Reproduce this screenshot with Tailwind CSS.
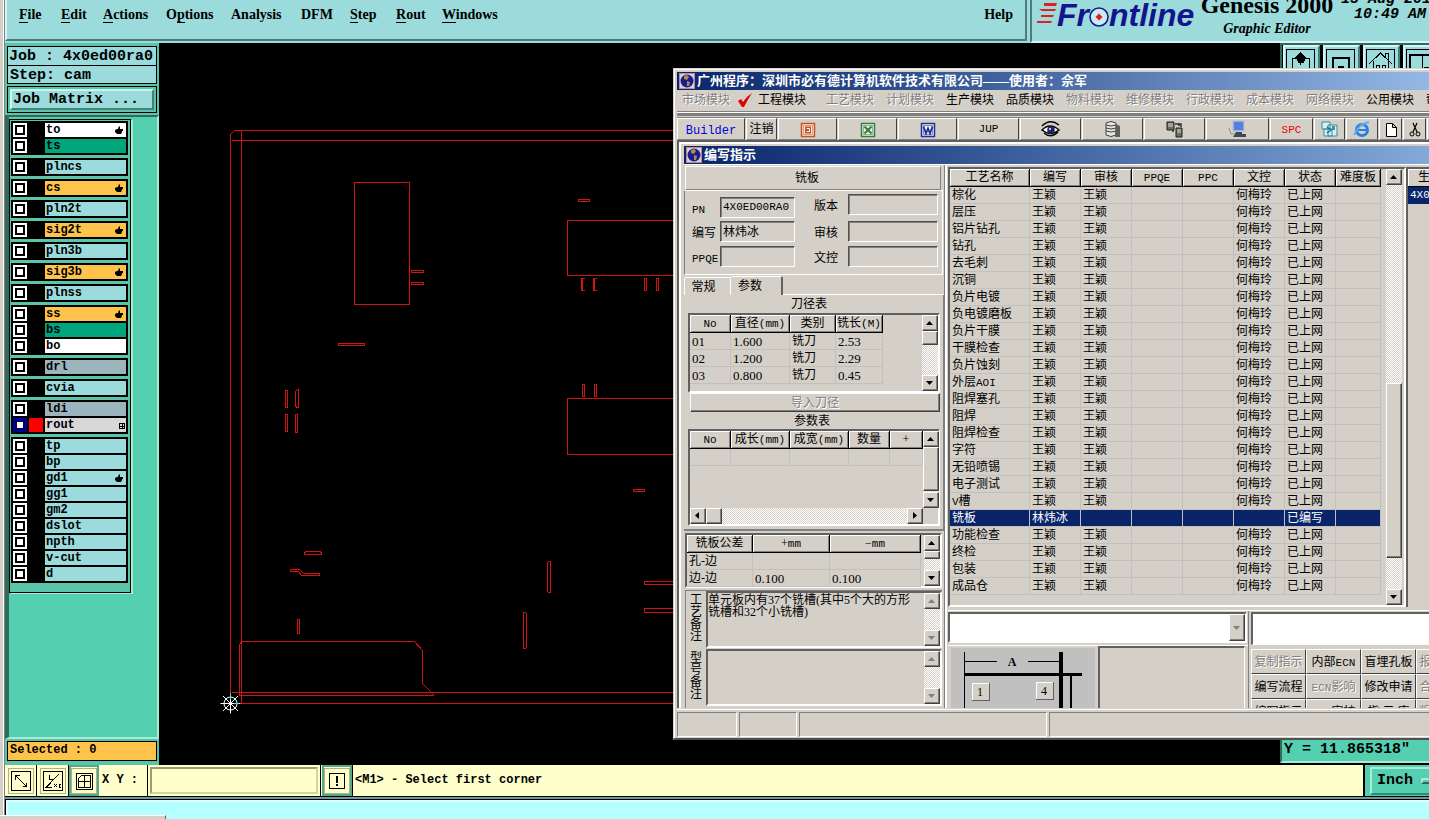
<!DOCTYPE html>
<html lang="zh">
<head>
<meta charset="utf-8">
<title>Genesis 2000 Graphic Editor</title>
<script src="https://cdn.jsdelivr.net/npm/@tailwindcss/browser@4"></script>
</head>
<body class="bg-black">
<div class="flex h-screen overflow-hidden bg-black text-black">
  <!-- desktop edge -->
  <div class="w-[5px] shrink-0 border-r border-[#808080] bg-[#d4d0c8] shadow-[inset_-1px_0_0_#fff]"></div>
  <div class="relative flex min-w-0 flex-1 flex-col">

    <!-- top bar -->
    <header class="flex h-[43px] shrink-0 overflow-hidden bg-[#9bdbdb]">
      <nav class="relative flex h-[41px] min-w-0 flex-1 border-r-2 border-b-2 border-l-2 border-r-[#4c7c7c] border-b-[#4c7c7c] border-l-[#d8f4f4] pt-[5px] pr-[12px] pl-[12px] font-['Liberation_Serif',serif] text-[14px] leading-5 font-bold" id="menu"></nav>
      <section class="relative ml-[3px] flex w-[399px] shrink-0 border-b-2 border-l-2 border-b-[#d8f4f4] border-l-[#4c7c7c]">
        <svg class="mt-[3px] ml-[5px] h-[22px] w-[20px] shrink-0" viewBox="0 0 20 22"><path d="M7 0H20L19 3H7zM2 6H19L18 8H5zM4 12H17L16 14H4zM0 18H15L14 20H0z" fill="#e02020"/></svg>
        <div class="-mt-[3px] flex h-9 w-[140px] shrink-0 items-center font-['Liberation_Sans',sans-serif] text-[32px] leading-9 font-bold text-[#14148c] italic">Fr<svg class="mt-[3px] h-[22px] w-[20px] shrink-0" viewBox="0 0 20 22"><circle cx="10" cy="11" r="9" fill="#c8ecf0" stroke="#14148c" stroke-width="1.500"/><path d="M10 7.500l3.500 3.500-3.500 3.500-3.500-3.500z" fill="#e02020"/></svg>ntline</div>
        <div class="-mt-[9px] flex w-[140px] shrink-0 flex-col items-center font-['Liberation_Serif',serif] font-bold whitespace-nowrap">
          <span class="text-[24px] leading-7">Genesis 2000</span>
          <span class="text-[14px] leading-5 italic">Graphic Editor</span>
        </div>
        <div class="-mt-[8px] ml-[4px] shrink-0 text-right font-['Liberation_Mono',monospace] text-[15px] leading-[15px] font-bold whitespace-nowrap italic"><div>15 Aug 2011</div><div class="pr-[14px]">10:49 AM</div></div>
      </section>
    </header>

    <!-- work area -->
    <main class="flex min-h-0 flex-1">
      <aside class="flex w-[154px] shrink-0 flex-col bg-[#5cc4a8] font-['Liberation_Mono',monospace] font-bold">
        <div class="mx-[2px] mt-[3px] border border-black bg-[#9bdbdb] text-[15px] leading-[19px] whitespace-nowrap">
          <div class="h-[19px] border-b border-black pl-[1px]">Job : 4x0ed00ra0</div>
          <div class="h-[17px] pl-[2px]">Step: cam</div>
        </div>
        <div class="mx-[2px] mt-[2px] border border-black p-[2px]">
          <button class="block h-[21px] w-full border-2 border-t-[#c8f8f0] border-r-[#4c7c7c] border-b-[#4c7c7c] border-l-[#c8f8f0] bg-[#9bdbdb] pl-[1px] text-left text-[15px] leading-[16px]">Job Matrix ...</button>
        </div>
        <div class="mt-[2px] flex min-h-0 flex-1 border-t-2 border-r-2 border-b-2 border-l-4 border-t-[#2f6b5b] border-r-[#a8ecd8] border-b-[#a8ecd8] border-l-[#2f6b5b] bg-[#54cfb0]">
          <div class="mt-[2px] flex w-[122px] flex-col self-start border border-black bg-[#5cc4a8] pt-[1px] pb-[6px] pl-[1px] shadow-[2px_1px_0_#a8ecd8]" id="layers"></div>
        </div>
        <div class="mx-[2px] mt-[2px] mb-[4px] h-[20px] border border-black bg-[#ffc34c] pl-[2px] text-[12px] leading-[17px]">Selected : 0</div>
      </aside>

      <section class="relative min-w-0 flex-1 overflow-hidden bg-black">
        <!-- board outline -->
        <svg class="absolute top-0 left-0 h-[722px] w-[1270px]" viewBox="159 43 1270 722" fill="none" stroke="#d01414" shape-rendering="crispEdges">
          <path d="M680 130.500H234.500L230.500 134.500V703.500M231.500 140.500H680M241.500 130.500V703.500H680M231.500 692.500H680"/>
          <path d="M239.500 695.500V644.500L241.500 641.500H414.500L422.500 650.500V683.500L433.500 694.500V695.500z"/>
          <path d="M354.500 182.500h55v122h-55zM567.500 220.500h120v55h-120zM567.500 398.500h120v56h-120z"/>
          <path d="M411.500 270.500h12v2h-12zM411.500 282.500h12v2h-12zM338.500 343.500h26v2h-26zM578.500 199.500h11v2h-11zM633.500 489.500h11v2h-11z"/>
          <path d="M285.500 390.500h2v17h-2zM295.500 391.500l2-2h1v18h-2l-1-2zM285.500 414.500h2v17h-2zM295.500 414.500h2v18h-2z"/>
          <path d="M584.500 278.500h-3v12h3M582.500 278.500v12M596.500 278.500h-3v12h3M594.500 278.500v12M644.500 278.500h2v12h-2zM656.500 278.500h2v12h-2zM582.500 384.500h2v12h-2zM594.500 384.500h2v12h-2z"/>
          <path d="M304.500 552.500l2-1h13l2 1v2h-17zM290.500 569.500h9l4 4h16v2h-18l-3-4h-8zM297.500 619.500h2v14h-2zM547.500 562.500l1-1h2v31h-2l-1-1zM523.500 612.500h2l1 1v34l-1 1h-2zM680 581.500h-35l-1 1v2h36M680 608.500h-35l-1 1v1l1 2h35"/>
          <g stroke="#fff" shape-rendering="auto"><circle cx="230.500" cy="703.500" r="6.500"/><path d="M220.500 703.500h20M230.500 693.500v20M223 696l15 15M238 696l-15 15"/><path stroke="#40e0e0" d="M230.500 693.500v6M234 703.500h5"/></g>
        </svg>

        <!-- view tools, partly covered by the window -->
        <div class="absolute top-0 right-0 flex w-[149px] gap-[3px] overflow-hidden border-t-2 border-l-2 border-[#2f6b5b] bg-black pl-[1px]" id="views"></div>
        <div class="absolute right-0 bottom-[2px] h-[30px] w-[149px] border-b-2 border-l-2 border-b-[#a8ecd8] border-l-[#2f6b5b] bg-[#54cfb0] pt-[8px] pl-[2px] font-['Liberation_Mono',monospace] text-[15px] leading-[18px] font-bold">Y = 11.865318"</div>

        <!-- application window -->
        <div class="absolute top-[25px] right-0 bottom-[25px] left-[514px] flex flex-col overflow-hidden border-t border-b-2 border-l border-t-[#d4d0c8] border-b-[#505050] border-l-[#d4d0c8] bg-[#d4d0c8] pt-[3px] pb-[1px] pl-[3px] font-['Liberation_Serif','Noto_Sans_CJK_SC',serif] text-[12px] leading-4 whitespace-nowrap shadow-[inset_1px_1px_0_#fff]">
          <div class="flex h-[18px] shrink-0 items-center gap-[2px] bg-linear-to-r from-[#0a246a] to-[#94b8e4] text-[13px] font-bold text-white"><span data-globe></span>广州程序：深圳市必有德计算机软件技术有限公司——使用者：佘军</div>
          <nav class="flex h-[20px] shrink-0 items-center pl-[5px]" id="modules"></nav>
          <div class="mt-[1px] h-[5px] shrink-0 border-t border-b-3 border-t-[#808080] border-b-[#808080] bg-white"></div>
          <div class="mt-[1px] flex h-[23px] shrink-0 gap-[1px] border-t border-[#808080]" id="toolbar"></div>

          <div class="flex min-h-0 flex-1 flex-col border-t-2 border-l-2 border-[#606060] pt-[4px] pl-[5px] shadow-[inset_2px_2px_0_#fff]">
            <div class="flex h-[18px] shrink-0 items-center gap-[2px] bg-linear-to-r from-[#0a246a] to-[#84a8d8] text-[13px] font-bold text-white"><span data-globe></span>编写指示</div>
            <div class="flex min-h-0 flex-1 overflow-hidden border-t border-white">

              <!-- left column -->
              <div class="flex w-[260px] shrink-0 flex-col">
                <div class="mt-[1px] mr-[3px] ml-[1px] h-[24px] shrink-0 border border-t-white border-r-[#808080] border-b-[#808080] border-l-white pr-[12px] text-center leading-[23px]">铣板</div>
                <div class="mr-[1px] flex h-[85px] shrink-0 border border-t-white border-r-white border-b-white border-l-[#808080] pl-[7px]" id="heads"></div>
                <div class="mt-[1px] flex h-[19px] shrink-0 items-end">
                  <button class="h-[18px] w-[47px] rounded-t-xs border-t border-r border-l border-white pr-[8px] leading-4">常规</button>
                  <button class="h-[19px] w-[52px] rounded-t-xs border-t border-r-2 border-t-white border-r-[#606060] pr-[12px] leading-4">参数</button>
                  <div class="h-px flex-1 bg-white"></div>
                </div>
                <div class="flex h-[236px] shrink-0 flex-col border-r border-b-2 border-[#808080] pr-[3px] pl-[4px]">
                  <div class="h-[18px] pr-[10px] text-center leading-[18px]">刀径表</div>
                  <div class="flex h-[80px] justify-between border-2 border-t-[#606060] border-r-white border-b-white border-l-[#606060]"><table id="tools" class="table-fixed border-separate border-spacing-0 self-start"></table><div data-bar="14"></div></div>
                  <button disabled class="ml-[2px] h-[19px] border border-t-white border-r-[#404040] border-b-[#404040] border-l-white text-center leading-4 text-[#808080] shadow-[inset_-1px_-1px_0_#808080] [text-shadow:1px_1px_0_#fff]">导入刀径</button>
                  <div class="h-[17px] pr-[4px] text-center leading-[18px]">参数表</div>
                  <div class="flex h-[97px] justify-between border-2 border-t-[#606060] border-r-white border-b-white border-l-[#606060]">
                    <div class="flex flex-1 flex-col justify-between"><table id="params" class="table-fixed border-separate border-spacing-0"></table>
                      <div class="flex h-4 bg-[repeating-conic-gradient(#fff_0_25%,#d4d0c8_0_50%)] bg-size-[2px_2px]"><button data-arrow="left"></button><div class="h-4 w-4 border border-t-white border-r-[#404040] border-b-[#404040] border-l-white bg-[#d4d0c8] shadow-[inset_-1px_-1px_0_#808080]"></div><button data-arrow="right" class="ml-auto"></button></div>
                    </div>
                    <div class="flex pb-[16px]"><div data-bar="44"></div></div>
                  </div>
                </div>
                <div class="mt-[2px] mr-[2px] ml-[1px] flex h-[55px] shrink-0 items-start justify-between border-2 border-t-[#606060] border-r-white border-b-white border-l-[#606060]"><table id="tolerance" class="table-fixed border-separate border-spacing-0"></table><div class="self-stretch" data-bar="8"></div></div>
                <div class="mt-[2px] mr-[2px] ml-[1px] flex min-h-0 flex-1 flex-col border-t border-l border-[#808080]" id="notes"></div>
              </div>

              <!-- right column -->
              <div class="flex min-w-0 flex-1 flex-col border-l border-[#808080] shadow-[inset_2px_0_0_#fff]">
                <div class="mt-[2px] ml-[3px] flex h-[440px] shrink-0">
                  <div class="flex w-[458px] shrink-0 border-2 border-t-[#606060] border-r-white border-b-white border-l-[#606060] pr-[2px]"><table id="process" class="table-fixed border-separate border-spacing-0 self-start"></table><div class="ml-auto flex" data-bar="175" data-top="198"></div></div>
                  <div class="min-w-0 flex-1 overflow-hidden border-t-2 border-l-2 border-[#606060]"><div class="h-[18px] border-b border-black pl-[10px] leading-[17px] shadow-[inset_1px_1px_0_#fff]">生产型号</div><div class="h-[17px] bg-[#0a246a] pl-[2px] font-['Liberation_Mono',monospace] text-[11px] leading-[17px] text-white">4X0ED00RA0</div></div>
                </div>
                <div class="mt-[3px] ml-[3px] flex min-h-0 flex-1 border-t border-white">
                  <div class="flex w-[301px] shrink-0 flex-col border-r border-[#808080]">
                    <div class="mt-[1px] flex h-[31px] w-[299px] shrink-0 border-2 border-t-[#606060] border-r-white border-b-white border-l-[#606060] bg-white">
                      <select aria-label="流程" class="min-w-0 flex-1 appearance-none bg-white"><option></option></select>
                      <button data-arrow="grey" data-tall></button>
                    </div>
                    <div class="mt-[2px] flex min-h-0 flex-1 overflow-hidden border-t border-white">
                      <svg class="mt-[2px] ml-[3px] h-[80px] w-[144px] shrink-0" viewBox="952 647 144 80" shape-rendering="crispEdges"><rect x="952" y="647" width="144" height="80" fill="#c0c0c0"/><path d="M965.500 651V727M965 660.500H998M1029 660.500H1062" stroke="#000"/><path d="M1072 674V727" stroke="#000" stroke-width="2"/><path d="M965 673.500H1083" stroke="#000" stroke-width="3"/><path d="M1062 651V727" stroke="#000" stroke-width="4"/><path d="M973 682h17v17h-17zM1037 681h17v17h-17z" fill="#d4d0c8" stroke="#606060"/><path d="M973 699v-17h17M1037 698v-17h17" stroke="#fff" fill="none"/><g font-family="Liberation Serif" font-size="12" text-anchor="middle"><text x="1013" y="665" font-weight="bold">A</text><text x="981" y="695">1</text><text x="1045" y="694">4</text></g></svg>
                      <div class="mr-[3px] ml-[3px] flex-1 border-t-2 border-r border-l-2 border-t-[#606060] border-r-white border-l-[#606060]"></div>
                    </div>
                  </div>
                  <div class="ml-[2px] flex min-w-0 flex-1 flex-col overflow-hidden">
                    <input aria-label="查询" class="mt-[1px] h-[33px] w-full shrink-0 border-t-2 border-b border-l-2 border-t-[#606060] border-b-white border-l-[#606060] bg-white">
                    <div class="mt-[4px] grid shrink-0 auto-rows-[25px] grid-cols-[repeat(4,55px)]" id="actions"></div>
                  </div>
                </div>
              </div>
            </div>
          </div>

          <footer class="mt-[1px] flex h-[28px] shrink-0 gap-[2px] border-t border-white pt-[2px]">
            <div class="w-[60px] border border-t-[#808080] border-r-white border-b-white border-l-[#808080]"></div>
            <div class="w-[58px] border border-t-[#808080] border-r-white border-b-white border-l-[#808080]"></div>
            <div class="w-[248px] border border-t-[#808080] border-r-white border-b-white border-l-[#808080]"></div>
            <div class="flex-1 border-t border-b border-l border-t-[#808080] border-b-white border-l-[#808080]"></div>
          </footer>
        </div>
      </section>
    </main>

    <!-- command line -->
    <div class="flex h-[32px] shrink-0 border-b border-black bg-[#ffffcc] font-['Liberation_Mono',monospace] text-[12px] font-bold">
      <button aria-label="Zoom" class="flex w-[32px] items-center justify-center border-r border-black"><svg class="size-[26px]" viewBox="0 0 26 26" fill="none" stroke="#000" shape-rendering="crispEdges"><path stroke="#b0b080" d="M.5 .5h25v25h-25z"/><path d="M3.500 3.500h19v19h-19zM7 7l12 12M7.500 11.500v-4h4M14.500 18.500h4v-4"/></svg></button>
      <button aria-label="Angle" class="flex w-[32px] items-center justify-center border-r border-black"><svg class="size-[26px]" viewBox="0 0 26 26" fill="none" stroke="#000" shape-rendering="crispEdges"><path stroke="#b0b080" d="M.5 .5h25v25h-25z"/><path d="M3.500 3.500h19v19h-19zM19 6L6 19.500h6M9.500 7v4h3M14 16l3 3M14 19l3-3M21 16h-2v3h2"/></svg></button>
      <button aria-label="Grid" class="flex w-[30px] items-center justify-center border-2 border-[#54a890] bg-[#ffffcc]"><svg class="size-[26px]" viewBox="0 0 26 26" fill="none" stroke="#000" shape-rendering="crispEdges"><path stroke="#b0b080" d="M.5 .5h25v25h-25z"/><path d="M5.500 5.500h16v16h-16zM13.500 7v13M7 13.500h13M7.500 19.500v-9l3-3h9v12z"/></svg></button>
      <label for="xy" class="w-[48px] pl-[3px] leading-[30px]">X Y :</label>
      <div class="w-[174px] border-x border-black p-[2px]"><input id="xy" class="h-full w-full border-2 border-t-[#9c9c70] border-r-[#d4d4a0] border-b-[#d4d4a0] border-l-[#9c9c70] bg-[#ffffcc] px-1"></div>
      <button aria-label="Alert" class="ml-[1px] flex w-[30px] items-center justify-center border-2 border-[#54a890] bg-[#ffffcc]"><svg class="size-[26px] shrink-0" viewBox="0 0 26 26" fill="none" stroke="#000" shape-rendering="crispEdges"><path stroke="#b0b080" d="M.5 .5h25v25h-25z"/><path d="M5.500 5.500h15v15h-15z"/><path fill="#000" stroke="none" d="M12 8h2v7h-2zM12 16h2v2h-2z"/></svg></button>
      <div class="min-w-0 flex-1 border-r-2 border-l border-black pl-[2px] leading-[30px]">&lt;M1&gt; - Select first corner</div>
      <div class="flex w-[64px] bg-[#54cfb0] pt-[2px] pl-[5px]"><button class="flex h-[28px] flex-1 items-center gap-2 border-2 border-r-0 border-t-[#a8ecd8] border-b-[#2f8b73] border-l-[#a8ecd8] pl-[5px] text-[15px] leading-5">Inch<span class="h-[6px] w-[14px] shrink-0 border-2 border-t-[#a8ecd8] border-r-[#2f6b5b] border-b-[#2f6b5b] border-l-[#a8ecd8]"></span></button></div>
    </div>
    <div class="h-[22px] shrink-0 border-t-2 border-[#6c9c98] bg-[#b4ffff]"><div class="h-full border-t border-l border-black shadow-[inset_2px_2px_0_#dcffff]"></div></div>
  </div>
  <div class="absolute bottom-0 left-0 h-[4px] w-[166px] border-t border-r border-t-white border-r-[#606060] bg-[#d4d0c8]"></div>
</div>

<script>
const $ = id => document.getElementById(id);
const hand = '<svg class="mr-[1px] ml-auto h-[9px] w-[9px]" viewBox="0 0 9 9"><path d="M4 0L5 1V3H8V5H7V6L6 8H2L0 6V4L2 3L3 3z"/></svg>';
const gridMark = '<svg class="ml-auto h-[7px] w-[6px]" viewBox="0 0 6 7" fill="none" stroke="#000" shape-rendering="crispEdges"><path d="M.5 1.500h5v5h-5zM3 1v5M0 4h6"/></svg>';
const up = 'border border-t-white border-r-[#404040] border-b-[#404040] border-l-white bg-[#d4d0c8] shadow-[inset_-1px_-1px_0_#808080]';
/* Latin runs inside Chinese labels use half-width letters */
const latin = s => s.replace(/[A-Za-z()]+/g, m => `<span class="font-['Liberation_Mono',monospace] text-[11px] leading-[10px]">${m}</span>`);

/* top menu */
$('menu').innerHTML = [['','F','ile',42],['','E','dit',42],['','A','ctions',63],['O','p','tions',65],['Analysis','','',70],['DFM','','',49],['','S','tep',46],['','R','out',46],['','W','indows',60]]
  .map(([a,b,c,w]) => `<a href="#" class="shrink-0 whitespace-nowrap" style="width:${w}px">${a}<span class="border-b border-black">${b}</span>${c}</a>`).join('') + '<a href="#" class="ml-auto">Help</a>';

/* layer list: groups of [name, colour, mark] */
const C = {w:'bg-white', g:'bg-[#00a57c]', c:'bg-[#9bdbdb]', o:'bg-[#ffc34c]', d:'bg-[#9cb4bc]', s:'bg-[#d8d8d8]'};
$('layers').innerHTML = [
  [['to','w',1],['ts','g']],[['plncs','c']],[['cs','o',1]],[['pln2t','c']],[['sig2t','o',1]],[['pln3b','c']],[['sig3b','o',1]],[['plnss','c']],
  [['ss','o',1],['bs','g'],['bo','w']],[['drl','d']],[['cvia','c']],[['ldi','d'],['rout','s',2]],
  [['tp','c'],['bp','c'],['gd1','c',1],['gg1','c'],['gm2','c'],['dslot','c'],['npth','c'],['v-cut','c'],['d','c']]
].map(g => '<div class="mb-[3px] flex w-[117px] flex-col gap-[2px] bg-black p-[2px]">' + g.map(([n,c,m]) =>
  `<label class="flex h-[14px] gap-[2px]"><input type="checkbox" class="size-[14px] shrink-0 appearance-none border-2 bg-white ${m===2 ? 'border-[#0000a0] shadow-[inset_0_0_0_2px_#000060]' : 'border-white shadow-[inset_0_0_0_2px_#000]'}"><span class="h-[14px] w-[14px] shrink-0 ${m===2 ? 'bg-[#ff0000]' : ''}"></span><span class="flex flex-1 items-center pr-[1px] pl-[1px] text-[12px] leading-[14px] ${C[c]}">${n}${m===1 ? hand : m===2 ? gridMark : ''}</span></label>`).join('') + '</div>').join('');

/* view tools */
$('views').innerHTML = ['<path d="M7 24V11h5v3M24 24V11h-5v3M15.500 18v-6"/><path fill="#000" d="M10 11l5.500-5L21 11h-3v4h-5v-4z"/>','<path stroke-width="2" d="M8 24V11h16v13M13 20h6"/>','<path d="M4 17L15.500 6L27 17M8 14v10h15V14M20 10V6h3v7M11 18h3v3h-3zM17 18h3v3h-3z"/>','<path stroke-width="2" d="M5 24V8h24"/><path d="M17 8v16M19 20h6"/>']
  .map(p => `<button class="h-[34px] w-[37px] shrink-0 border-2 border-t-[#d8f4f4] border-r-[#4c7c7c] border-b-[#4c7c7c] border-l-[#d8f4f4] bg-[#9bdbdb]"><svg class="h-[30px] w-[33px]" viewBox="0 0 33 30" fill="none" stroke="#000" shape-rendering="crispEdges"><path d="M1.500 30V2.500h28V30"/>${p}</svg></button>`).join('');

/* title icons */
document.querySelectorAll('[data-globe]').forEach(e => e.outerHTML = '<svg class="ml-[2px] size-4 shrink-0" viewBox="0 0 16 16"><path d="M0 0h16v16H0z" fill="#c08888"/><path d="M1 1h14v14H1z" fill="#d8d0e0"/><circle cx="8" cy="8" r="6.500" fill="#1c1c90"/><path d="M5 3l3-1 2 2-2 3-3-1zM8 8l3 1-1 4-2 0z" fill="#a89040"/></svg>');

/* module menu */
$('modules').innerHTML = [['市场',0],['工程',1],['工艺',0],['计划',0],['生产',1],['品质',1],['物料',0],['维修',0],['行政',0],['成本',0],['网络',0],['公用',1],['帮助',1]].map(([t,on],i) =>
  (i===1 ? '<svg class="mr-[4px] -ml-[6px] h-[14px] w-[18px] shrink-0" viewBox="0 0 18 14"><path d="M2 8l3-2 2 3q4-6 9-9q-4 6-8 14H6z" fill="#e00000"/></svg>' : '') +
  `<button class="w-[48px] shrink-0 ${i===1 ? 'mr-[20px]' : 'mr-[12px]'} ${on ? '' : 'text-[#808080] [text-shadow:1px_1px_0_#fff]'}">${t}模块</button>`).join('');

/* toolbar */
const ico = (s) => `<svg class="size-5" viewBox="0 0 20 20">${s}</svg>`;
const office = (c,g) => ico(`<path d="M3.500 4.500h13v13h-13z" fill="#f4ece0" stroke="${c}" stroke-width="1.500"/><path d="M5.500 6.500h9v9h-9z" fill="none" stroke="${c}" stroke-width=".5"/>${g}`);
$('toolbar').innerHTML = [
  ['<span class="pt-[3px] font-[\'Liberation_Mono\',monospace] text-[12px] text-[#0000e0]">Builder</span>',68],['注销',31],
  [office('#c85020','<path d="M7 7.500h6v7H7z" fill="#c85020"/><path d="M8.500 9.500h3v3h-3" stroke="#fff" fill="none"/>'),59],
  [office('#2c8040','<path d="M6.500 7.500l7 7M13.500 7.500l-7 7" stroke="#2c8040" stroke-width="2"/>'),59],
  [office('#1830a0','<path d="M5.500 7.500l2.500 7 2-5 2 5 2.500-7" fill="none" stroke="#1830a0" stroke-width="1.800"/>'),59],
  [latin('JUP'),61],
  [ico('<path d="M1 11q8-8 17 0q-8 7-17 0z" fill="#fff" stroke="#000" stroke-width="1.500"/><circle cx="10" cy="11" r="3.800" fill="#20206c"/><circle cx="9" cy="10" r="1" fill="#fff"/><path d="M1 7q8-8 17-1M3 14q7 6 14-1" fill="none" stroke="#000" stroke-width="1.500"/>'),61],
  [ico('<path d="M3 4q5-3 10 0v12q-5 3-10 0z" fill="#e4e4e0" stroke="#404040"/><path d="M3 6q5 2 10 0M3 9q5 2 10 0M3 12q5 2 10 0" fill="none" stroke="#404040"/><path d="M13 5l4 2v11h-5z" fill="#606058"/>'),61],
  [ico('<path d="M2 3h7v8H2zM11 9h6v9h-6z" fill="#687060" stroke="#202020"/><path d="M3 5h5M3 7h5M12 11h4M12 13h4" stroke="#d8d8d0"/><path d="M10 5h6v3M8 13v-2M14 4v3" fill="none" stroke="#303030" stroke-width="1.500"/>'),61],
  [ico('<path d="M5 2h11v10H5z" fill="#5080e8" stroke="#c0c0c0" stroke-width="1.500"/><path d="M8 13h6v2h4v3H5z" fill="#404850"/><path d="M1 9l2 6h4" fill="none" stroke="#909090"/>'),63],
  [`<span class="text-[#f00000]">${latin('SPC')}</span>`,43],
  [ico('<path d="M2 3h8v7H2zM8 6h9v11H8zM4 10h8v7H4z" fill="#d8f0f4" stroke="#3090a0"/><path d="M7 8l4 3-4 3M12 8h3M12 10h3" fill="none" stroke="#207080" stroke-width="1.500"/>'),31],
  [ico('<circle cx="10" cy="11" r="5.500" fill="none" stroke="#2880e0" stroke-width="3"/><path d="M6 11h9" stroke="#2880e0" stroke-width="2"/><path d="M2 16Q8 4 17 3" fill="none" stroke="#60b0f0" stroke-width="2"/>'),32],
  [ico('<path d="M5.500 4.500h6l4 4v9h-10zM11.500 4.500v4h4" fill="#fff" stroke="#000"/>'),23],
  [ico('<path d="M8 4l4 9M12 4l-4 9" stroke="#000" stroke-width="1.200"/><circle cx="7" cy="15" r="2" fill="none" stroke="#000"/><circle cx="13" cy="15" r="2" fill="none" stroke="#000"/>'),23],['',23]
].map(([h,w]) => `<button class="flex h-[22px] shrink-0 items-center justify-center border border-t-white border-r-[#404040] border-b-[#808080] border-l-white" style="width:${w}px">${h}</button>`).join('');

/* header fields */
const field = (l,v,h,w,lw) => `<div class="flex items-start" style="height:${h}px"><label for="f-${l}" class="shrink-0 pt-[4px]" style="width:${lw}px">${latin(l)}</label><input id="f-${l}" value="${v}" class="h-[21px] border border-t-[#505050] border-r-white border-b-white border-l-[#505050] px-[2px] pb-[2px] leading-4 shadow-[inset_1px_1px_0_#808080] ${/^\w/.test(v) ? "font-['Liberation_Mono',monospace] text-[11px]" : 'text-[12px]'}" style="width:${w}px"></div>`;
$('heads').innerHTML = '<div class="pt-[6px]">' + field('PN','4X0ED00RA0',24,75,28) + field('编写','林炜冰',25,75,28) + field('PPQE','',20,75,28) + '</div><div class="ml-[19px] pt-[3px]">' + field('版本','',27,90,34) + field('审核','',25,90,34) + field('文控','',20,90,34) + '</div>';

/* tables */
const table = (id, widths, heads, rows, sel) => {
  $(id).style.width = widths.reduce((a,b) => a+b) + 'px';
  $(id).innerHTML = '<colgroup>' + widths.map(w => `<col style="width:${w}px">`).join('') + '</colgroup><thead><tr>' +
    heads.map(h => `<th class="h-[18px] border-r border-b border-black p-0 text-center font-normal whitespace-nowrap shadow-[inset_1px_1px_0_#fff,inset_-1px_-1px_0_#808080]"><div class="h-[17px] leading-[17px]">${latin(h)}</div></th>`).join('') + '</tr></thead><tbody>' +
    rows.map((r,i) => `<tr class="${i===sel ? 'bg-[#0a246a] text-white' : ''}">` + r.map(c => `<td class="h-[17px] border-r border-b border-[#c0c0c0] p-0 pl-[2px] whitespace-nowrap"><div class="h-[16px] leading-[17px]">${/^[\d.]+$/.test(c) ? `<span class="text-[13px]">${c}</span>` : latin(c)}</div></td>`).join('') + '</tr>').join('') + '</tbody>';
};
table('tools',[41,59,46,47],['No','直径(mm)','类别','铣长(M)'],[['01','1.600','铣刀','2.53'],['02','1.200','铣刀','2.29'],['03','0.800','铣刀','0.45']]);
table('params',[41,59,59,41,33],['No','成长(mm)','成宽(mm)','数量','+'],[['','','','','']]);
table('tolerance',[66,77,91],['铣板公差','+mm','−mm'],[['孔-边','',''],['边-边','0.100','0.100']]);
const names = '棕化 层压 铝片钻孔 钻孔 去毛刺 沉铜 负片电镀 负电镀磨板 负片干膜 干膜检查 负片蚀刻 外层AOI 阻焊塞孔 阻焊 阻焊检查 字符 无铅喷锡 电子测试 V槽 铣板 功能检查 终检 包装 成品仓'.split(' ');
table('process',[80,51,51,51,51,51,51,45],['工艺名称','编写','审核','PPQE','PPC','文控','状态','难度板'],
  names.map((t,i) => i===19 ? [t,'林炜冰','','','','','已编写',''] : [t,'王颖','王颖','','','何梅玲','已上网','']), 19);

/* notes */
$('notes').innerHTML = [['工艺备注','单元板内有37个铣槽(其中5个大的方形铣槽和32个小铣槽)'],['型号备注','']].map(([l,t],i) =>
  `<div class="flex h-[58px] shrink-0"><label for="note${i}" class="w-[20px] shrink-0 pt-[3px] pl-[4px] leading-3 whitespace-normal"><span class="block w-[12px] break-all">${l}</span></label><div class="mb-[1px] flex min-w-0 flex-1 border-2 border-t-[#606060] border-r-white border-b-white border-l-[#606060]"><textarea id="note${i}" class="block min-w-0 flex-1 resize-none overflow-hidden bg-transparent pt-[1px] pr-[12px] text-[12px] leading-3 break-all">${t}</textarea><div data-bar="0"></div></div></div>`).join('');

/* action buttons */
$('actions').innerHTML = [['复制指示',0],['内部ECN',1],['盲埋孔板',1],['报废审核',0],['编写流程',1],['ECN影响',0],['修改申请',1],['合拼审核',0],['编写指示',1],['ECN审核',1],['指 示 库',1],['粗糙检查',0]].map(([t,on]) =>
  `<button class="overflow-hidden border border-t-white border-r-[#404040] border-b-[#404040] border-l-white text-center leading-[22px] ${on ? '' : 'text-[#808080] [text-shadow:1px_1px_0_#fff]'}">${latin(t)}</button>`).join('');

/* scroll bars and arrows */
document.querySelectorAll('[data-bar]').forEach(e => {
  const h = +e.dataset.bar, top = +(e.dataset.top || 0), k = h ? '' : '-grey';
  e.className += ' flex w-4 shrink-0 flex-col bg-[repeating-conic-gradient(#fff_0_25%,#d4d0c8_0_50%)] bg-size-[2px_2px]';
  e.innerHTML = `<button data-arrow="up${k}"></button>` + (h ? `<div class="w-4 shrink-0 ${up}" style="height:${h}px;margin-top:${top}px"></div>` : '') + `<button data-arrow="down${k}" class="mt-auto"></button>`;
});
const tri = {up:'M3 9h7L6.500 5z', down:'M3 5h7L6.500 9z', left:'M8 3v7L4 6.500z', right:'M5 3v7L9 6.500z', grey:'M3 5h7L6.500 9z'};
document.querySelectorAll('[data-arrow]').forEach(e => {
  const [d,g] = e.dataset.arrow.split('-'), grey = g || d === 'grey';
  e.setAttribute('aria-label', d);
  e.className += ` flex w-4 shrink-0 items-center justify-center ${up} ${'tall' in e.dataset ? 'h-full' : 'h-4'}`;
  e.innerHTML = `<svg class="h-[14px] w-[14px] shrink-0" viewBox="0 0 14 14"><path d="${tri[d]}" fill="${grey ? '#808080' : '#000'}"/></svg>`;
});
</script>
</body>
</html>
